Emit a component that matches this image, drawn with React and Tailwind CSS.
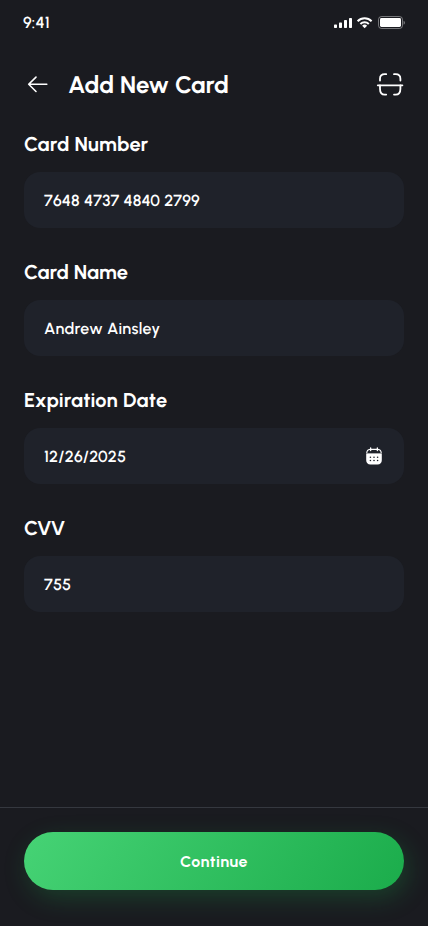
import React from "react";

function StatusBar() {
  return (
    <div className="flex h-11 items-center justify-between pl-[23px] pr-[23px]">
      <span className="mt-px text-base font-semibold leading-5 tracking-[0.2px]">9:41</span>
      <div className="mt-px flex items-center">
        <svg width="72" height="14" viewBox="0 0 72 14" fill="none">
          <g fill="#fff">
            <rect x="1" y="8.5" width="3" height="3.5" rx="0.7" />
            <rect x="6" y="6.5" width="3" height="5.5" rx="0.7" />
            <rect x="11" y="4" width="3" height="8" rx="0.7" />
            <rect x="16" y="2" width="3" height="10" rx="0.7" />
          </g>
          <g stroke="#fff" strokeWidth="2">
            <path d="M24.6 5.2a10 10 0 0 1 14 0" />
            <path d="M27.4 8a6 6 0 0 1 8.4 0" />
          </g>
          <path d="M29.1 9.8a3.6 3.6 0 0 1 5 0L31.6 12.3z" fill="#fff" />
          <rect x="45.5" y="0.5" width="24" height="12" rx="3" stroke="#fff" strokeOpacity="0.4" />
          <rect x="47" y="2" width="21" height="9" rx="1.4" fill="#fff" />
          <path d="M70.6 4.7v4a2.2 2.2 0 0 0 0-4z" fill="#fff" fillOpacity="0.45" />
        </svg>
      </div>
    </div>
  );
}

function BackIcon() {
  return (
    <svg width="28" height="28" viewBox="0 0 28 28" fill="none" stroke="#fff" strokeWidth="1.6" strokeLinecap="round" strokeLinejoin="round">
      <path d="M22.8 14.3H4.7M12 7.1l-7.3 7.2L12 21.5" />
    </svg>
  );
}

function ScanIcon() {
  return (
    <svg width="28" height="28" viewBox="0 0 28 28" fill="none" stroke="#fff" strokeWidth="1.8" strokeLinecap="round">
      <path d="M1.8 15.3h24.6" />
      <path d="M4 10.6V8.8c0-2.9 1.8-4.6 4.8-4.6h1.4M18 4.2h1.6c3 0 4.8 1.7 4.8 4.6v1.8" />
      <path d="M4 15.5v3.2c0 3.6 1.8 5.9 4.8 5.9h1.4M18 24.6h1.6c3 0 4.8-2.3 4.8-5.9v-3.2" />
    </svg>
  );
}

function CalendarIcon() {
  return (
    <svg width="20" height="20" viewBox="0 0 20 20">
      <path d="M2.2 7.5h15.6v6.8c0 2.7-1.6 4.2-4.3 4.2h-7c-2.7 0-4.3-1.5-4.3-4.2z" fill="#fff" />
      <path d="M2.2 7.2c0-2.7 1.4-4.3 3.8-4.5V1.9a.65.65 0 0 1 1.3 0v.8h5.4v-.8a.65.65 0 0 1 1.3 0v.8c2.4.2 3.8 1.8 3.8 4.5z" fill="#fff" />
      <path d="M3.3 7c.1-1.9 1.1-2.9 2.7-3v.6a.65.65 0 0 0 1.3 0V4h5.4v.6a.65.65 0 0 0 1.3 0V4c1.6.1 2.6 1.1 2.7 3z" fill="#1f222a" />
      <g fill="#1f222a">
        <circle cx="6.4" cy="11.3" r="0.8" />
        <circle cx="10" cy="11.3" r="0.8" />
        <circle cx="13.6" cy="11.3" r="0.8" />
        <circle cx="6.4" cy="14.5" r="0.8" />
        <circle cx="10" cy="14.5" r="0.8" />
        <circle cx="13.6" cy="14.5" r="0.8" />
      </g>
    </svg>
  );
}

function Field({ label, value, labelClass, valueClass, icon }) {
  return (
    <label className="flex flex-col gap-4">
      <span className={`h-6 whitespace-nowrap text-xl font-bold leading-6 ${labelClass}`}>{label}</span>
      <span className="flex h-14 items-center justify-between rounded-2xl bg-[#1f222a] px-5">
        <span className={`mt-px whitespace-nowrap text-base font-semibold leading-6 ${valueClass}`}>{value}</span>
        {icon}
      </span>
    </label>
  );
}

export default function App() {
  return (
    <div className="flex h-[926px] w-[428px] flex-col overflow-hidden bg-[#1a1b20] font-[Urbanist,Lato,sans-serif] text-white [text-rendering:geometricPrecision]">
      <StatusBar />
      <header className="mt-4 flex h-12 items-center px-6">
        <BackIcon />
        <h1 className="ml-4 flex-1 whitespace-nowrap pt-px text-2xl font-bold leading-8 tracking-[0.08px]">Add New Card</h1>
        <ScanIcon />
      </header>
      <main className="mt-6 flex flex-1 flex-col gap-8 px-6">
        <Field label="Card Number" value="7648 4737 4840 2799" labelClass="tracking-[0.2px]" valueClass="tracking-[0.2px]" />
        <Field label="Card Name" value="Andrew Ainsley" labelClass="tracking-[0.05px]" valueClass="tracking-[0.35px]" />
        <Field label="Expiration Date" value="12/26/2025" labelClass="tracking-[0.28px]" valueClass="tracking-[0.2px]" icon={<CalendarIcon />} />
        <Field label="CVV" value="755" labelClass="tracking-[-1px]" valueClass="tracking-[0.2px]" />
      </main>
      <footer className="h-[119px] border-t border-[#35383f] px-6 pt-6">
        <button className="flex h-[58px] w-full items-center justify-center rounded-full bg-[linear-gradient(125deg,#46d375_0%,#1bac4b_100%)] pt-px text-base font-bold tracking-[0.45px] shadow-[4px_8px_24px_rgba(27,172,75,0.25)]">
          Continue
        </button>
      </footer>
    </div>
  );
}
